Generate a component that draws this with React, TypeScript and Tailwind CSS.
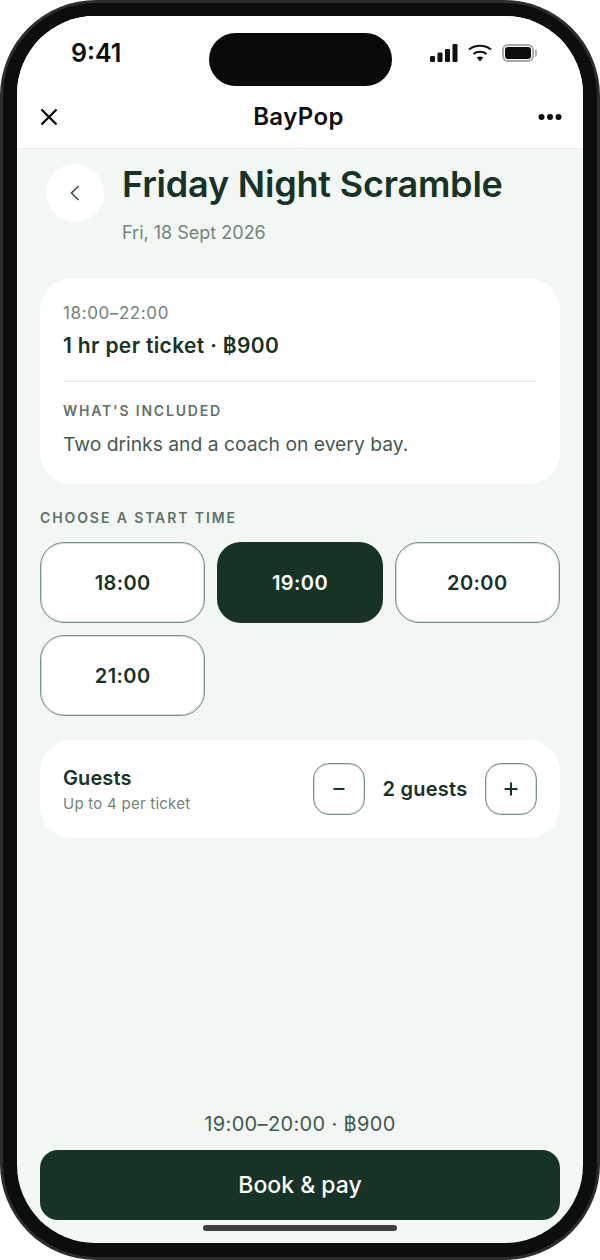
import React from "react";

const font = { fontFamily: '"Inter", "Noto Sans", sans-serif' };

function Slot({ t, active }: { t: string; active?: boolean }) {
  return (
    <div
      className={
        active
          ? "flex h-[81px] items-center justify-center rounded-[24px] bg-[#173325] text-[20px] font-semibold tracking-[0.4px] text-white"
          : "flex h-[81px] items-center justify-center rounded-[24px] border border-[#7a8f85] bg-white text-[20px] font-semibold tracking-[0.4px] text-[#173325] shadow-[inset_0_0_0_1px_#d5ded9]"
      }
    >
      {t}
    </div>
  );
}

export default function App() {
  return (
    <div className="h-[1260px] w-[600px] bg-white" style={font}>
      <div className="h-full w-full rounded-[96px] border-[3px] border-[#2c2e2d] bg-[#0c0e0d] px-[14px] pb-[14px] pt-[13px]">
        <div className="flex h-full w-full flex-col overflow-hidden rounded-[78px] bg-[#f2f7f4]">
          <header className="h-[133px] shrink-0 border-b border-[#e9edea] bg-white">
            <div className="flex h-[70px] items-start pt-[17px]">
              <div className="w-[192px] pl-[54px] pt-[3px] text-[25px] font-semibold leading-[34px] text-[#0b0b0b]">9:41</div>
              <div className="h-[53px] w-[183px] rounded-[27px] bg-[#0a0a0a]" />
              <div className="flex flex-1 items-center gap-[10px] pl-[38px] pt-[11px]">
                <svg width="28" height="18" viewBox="0 0 28 18" fill="#111">
                  <rect x="0" y="12" width="5" height="6" rx="1.2" />
                  <rect x="7.5" y="8.5" width="5" height="9.5" rx="1.2" />
                  <rect x="15" y="5" width="5" height="13" rx="1.2" />
                  <rect x="22.5" y="0" width="5" height="18" rx="1.2" />
                </svg>
                <svg width="24" height="18" viewBox="0 0 24 18" fill="none" stroke="#111" strokeWidth="2">
                  <path d="M1 5.5C7 .5 17 .5 23 5.5" />
                  <path d="M5.5 10C9 7 15 7 18.5 10" />
                  <path d="M8.8 13.6L12 17.4L15.2 13.6C13.4 12.2 10.6 12.2 8.8 13.6Z" fill="#111" stroke="none" />
                </svg>
                <div className="flex items-center gap-[1px]">
                  <div className="h-[18px] w-[32px] rounded-[6px] border-2 border-[#a8a8a8] p-[1px]">
                    <div className="h-full w-full rounded-[3px] bg-[#0c0c0c]" />
                  </div>
                  <div className="h-[8px] w-[2px] rounded-r-[2px] bg-[#b0b0b0]" />
                </div>
              </div>
            </div>
            <div className="flex h-[62px] items-center justify-between pl-[22px] pr-[21px]">
              <svg width="20" height="20" viewBox="0 0 20 20" fill="none" stroke="#0e0e0e" strokeWidth="2.4">
                <path d="M2.5 2.5L17.5 17.5M17.5 2.5L2.5 17.5" />
              </svg>
              <div className="text-[24px] font-semibold tracking-[0.4px] text-[#0e0e0e]">BayPop</div>
              <svg width="24" height="8" viewBox="0 0 24 8" fill="#0e0e0e">
                <circle cx="3.5" cy="4" r="3" />
                <circle cx="12" cy="4" r="3" />
                <circle cx="20.5" cy="4" r="3" />
              </svg>
            </div>
          </header>

          <main className="flex flex-1 flex-col px-[23px]">
            <div className="flex gap-[18px] pl-[6px] pt-[15px]">
              <div className="flex h-[58px] w-[58px] items-center justify-center rounded-full bg-white">
                <svg width="12" height="18" viewBox="0 0 12 18" fill="none" stroke="#3c4f46" strokeWidth="1.6">
                  <path d="M9.5 2L2.5 9L9.5 16" />
                </svg>
              </div>
              <div>
                <h1 className="text-[36px] font-semibold leading-[40px] tracking-[-0.2px] text-[#173325]">Friday Night Scramble</h1>
                <p className="mt-[17px] text-[18px] leading-[24px] text-[#72847b]">Fri, 18 Sept 2026</p>
              </div>
            </div>

            <section className="mt-[33px] rounded-[32px] bg-white px-[23px] pb-[27px] pt-[24px]">
              <p className="text-[17px] leading-[22px] tracking-[0.6px] text-[#72847b]">18:00–22:00</p>
              <p className="mt-[9px] text-[21px] font-semibold leading-[26px] tracking-[0.35px] text-[#173325]">1 hr per ticket · ฿900</p>
              <div className="mt-[22px] h-px bg-[#e3e7e4]" />
              <p className="mt-[20px] text-[14px] font-semibold leading-[18px] tracking-[1.8px] text-[#5f7268]">WHAT'S INCLUDED</p>
              <p className="mt-[11px] text-[19.3px] leading-[26px] text-[#45594f]">Two drinks and a coach on every bay.</p>
            </section>

            <p className="mt-[25px] text-[14px] font-semibold leading-[18px] tracking-[1.9px] text-[#5f7268]">CHOOSE A START TIME</p>

            <div className="mt-[15px] grid grid-cols-3 gap-[12px]">
              <Slot t="18:00" />
              <Slot t="19:00" active />
              <Slot t="20:00" />
              <Slot t="21:00" />
            </div>

            <section className="mt-[24px] flex h-[98px] items-center rounded-[32px] bg-white pl-[23px] pr-[23px]">
              <div className="flex-1">
                <p className="text-[20px] font-semibold leading-[26px] tracking-[0.1px] text-[#173325]">Guests</p>
                <p className="mt-[3px] text-[15px] leading-[20px] tracking-[0.25px] text-[#72847b]">Up to 4 per ticket</p>
              </div>
              <div className="flex h-[52px] w-[52px] items-center justify-center rounded-[16px] border border-[#7a8f85] shadow-[inset_0_0_0_1px_#d5ded9]">
                <svg width="14" height="14" viewBox="0 0 14 14" stroke="#173325" strokeWidth="2">
                  <path d="M1.5 7H12.5" />
                </svg>
              </div>
              <p className="w-[120px] text-center text-[20px] font-semibold tracking-[0.25px] text-[#173325]">2 guests</p>
              <div className="flex h-[52px] w-[52px] items-center justify-center rounded-[16px] border border-[#7a8f85] shadow-[inset_0_0_0_1px_#d5ded9]">
                <svg width="14" height="14" viewBox="0 0 14 14" stroke="#173325" strokeWidth="2">
                  <path d="M0.5 7H13.5M7 0.5V13.5" />
                </svg>
              </div>
            </section>

            <div className="mt-auto">
              <p className="text-center text-[20px] leading-[26px] tracking-[0.35px] text-[#45594f]">19:00–20:00 · ฿900</p>
              <div className="mt-[13px] flex h-[70px] items-center justify-center rounded-[18px] bg-[#173325] text-[23px] font-medium text-white">Book &amp; pay</div>
              <div className="flex h-[23px] justify-center pt-[5px]">
                <div className="h-[6px] w-[194px] rounded-full bg-[#3e3f3e]" />
              </div>
            </div>
          </main>
        </div>
      </div>
    </div>
  );
}
